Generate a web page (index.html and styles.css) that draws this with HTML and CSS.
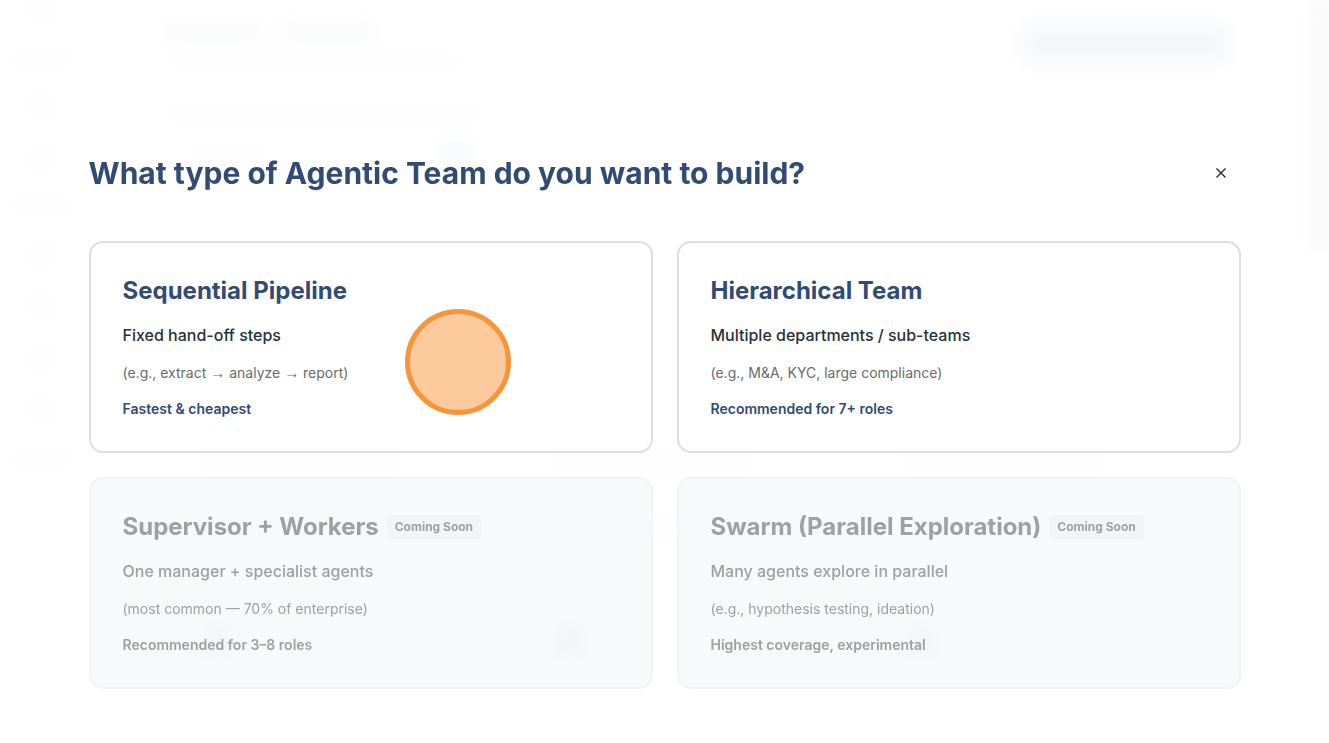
FILE: index.html
```html
<!DOCTYPE html>
<html lang="en">
<head>
    <meta charset="UTF-8">
    <meta name="viewport" content="width=device-width, initial-scale=1.0">
    <title>Agentic Teams</title>
    <link rel="stylesheet" href="styles.css">
</head>
<body>
    <!-- Page behind the dialog, faded and blurred by the overlay -->
    <div class="page" aria-hidden="true">
        <div class="sidebar">
            <span class="nav-item"></span>
            <span class="nav-item wide"></span>
            <span class="nav-item"></span>
            <span class="nav-item"></span>
            <span class="nav-item wide"></span>
            <span class="nav-item"></span>
            <span class="nav-item"></span>
            <span class="nav-item"></span>
            <span class="nav-item"></span>
            <span class="nav-item wide"></span>
        </div>
        <div class="content">
            <div class="content-header">
                <div class="heading">
                    <div class="heading-words">
                        <span class="word"></span>
                        <span class="word"></span>
                    </div>
                    <span class="subtitle"></span>
                </div>
                <span class="page-action"></span>
            </div>
            <span class="tabs"></span>
            <div class="filter">
                <span class="filter-label"></span>
                <span class="filter-count"></span>
            </div>
            <div class="tiles">
                <div class="tile"><span class="tile-title"></span><span class="tile-text"></span><span class="tile-dot"></span></div>
                <div class="tile"><span class="tile-title"></span><span class="tile-text"></span><span class="tile-dot"></span></div>
                <div class="tile"><span class="tile-title"></span><span class="tile-text"></span><span class="tile-dot"></span></div>
            </div>
        </div>
        <div class="scrollbar"></div>
    </div>

    <div class="overlay">
        <div class="dialog" role="dialog" aria-labelledby="dialog-title">
            <div class="dialog-header">
                <h1 class="dialog-title" id="dialog-title">What type of Agentic Team do you want to build?</h1>
                <button class="close" type="button" aria-label="Close">
                    <svg width="16" height="16" viewBox="0 0 16 16" fill="none" stroke="currentColor" stroke-width="1.4">
                        <path d="M3.5 3.5l9 9M12.5 3.5l-9 9"/>
                    </svg>
                </button>
            </div>

            <div class="cards">
                <button class="card" type="button">
                    <span class="card-title">Sequential Pipeline</span>
                    <span class="card-text">Fixed hand-off steps</span>
                    <span class="card-example">(e.g., extract <span class="arrow">→</span> analyze <span class="arrow">→</span> report)</span>
                    <span class="card-note">Fastest &amp; cheapest</span>
                    <span class="click-marker"></span>
                </button>
                <button class="card" type="button">
                    <span class="card-title">Hierarchical Team</span>
                    <span class="card-text">Multiple departments / sub-teams</span>
                    <span class="card-example">(e.g., M&amp;A, KYC, large compliance)</span>
                    <span class="card-note">Recommended for 7+ roles</span>
                </button>
                <button class="card" type="button" disabled>
                    <span class="card-title">Supervisor + Workers <span class="badge">Coming Soon</span></span>
                    <span class="card-text">One manager + specialist agents</span>
                    <span class="card-example">(most common — 70% of enterprise)</span>
                    <span class="card-note">Recommended for 3–8 roles</span>
                </button>
                <button class="card" type="button" disabled>
                    <span class="card-title">Swarm (Parallel Exploration) <span class="badge">Coming Soon</span></span>
                    <span class="card-text">Many agents explore in parallel</span>
                    <span class="card-example">(e.g., hypothesis testing, ideation)</span>
                    <span class="card-note">Highest coverage, experimental</span>
                </button>
            </div>
        </div>
    </div>
</body>
</html>
```
FILE: styles.css
```css
* {
    box-sizing: border-box;
}

body {
    margin: 0;
    font-family: Inter, sans-serif;
    color: #28303b;
    background: #fff;
}

/* Blurred page */
.page {
    position: fixed;
    inset: 0;
    display: flex;
    overflow: hidden;
    filter: blur(8px);
    opacity: 0.05;
}

.sidebar {
    display: flex;
    flex-direction: column;
    align-items: center;
    gap: 32px;
    width: 84px;
}

.nav-item {
    width: 20px;
    height: 20px;
    background: #c8ccd0;
}

.nav-item.wide {
    width: 56px;
    height: 12px;
}

.content {
    flex: 1;
    padding: 20px 84px 20px 80px;
}

.content-header {
    display: flex;
    justify-content: space-between;
    align-items: flex-start;
}

.heading-words {
    display: flex;
    gap: 20px;
}

.word {
    width: 96px;
    height: 24px;
    background: #b4c0d0;
}

.subtitle {
    display: block;
    width: 300px;
    height: 10px;
    margin-top: 12px;
    background: #d8dce0;
}

.page-action {
    width: 204px;
    height: 40px;
    margin-top: 4px;
    background: #4f6c9a;
}

.tabs {
    display: block;
    width: 320px;
    height: 14px;
    margin-top: 40px;
    background: #d8dce0;
}

.filter {
    display: flex;
    justify-content: space-between;
    width: 308px;
    padding-left: 28px;
    margin-top: 20px;
}

.filter-label {
    width: 72px;
    height: 12px;
    margin-top: 4px;
    background: #d8dce0;
}

.filter-count {
    width: 32px;
    height: 28px;
    background: #8fb0c8;
}

.tiles {
    display: grid;
    grid-template-columns: repeat(3, 1fr);
    gap: 32px;
    padding: 284px 0 0 40px;
}

.tile {
    display: flex;
    flex-direction: column;
    gap: 44px;
}

.tile-title,
.tile-text {
    height: 20px;
    background: #d0d4d8;
}

.tile-title {
    width: 60%;
}

.tile-dot {
    width: 28px;
    height: 28px;
    margin-top: 48px;
    background: #303840;
}

.scrollbar {
    width: 18px;
    height: 250px;
    background: #a0a0a0;
}

/* Dialog */
.overlay {
    position: relative;
    min-height: 100vh;
    padding: 153px 24px 48px;
}

.dialog {
    max-width: 1152px;
    margin: 0 auto;
}

.dialog-header {
    display: flex;
    justify-content: space-between;
    align-items: center;
    margin-bottom: 48px;
}

.dialog-title {
    margin: 0;
    font-size: 30px;
    line-height: 40px;
    font-weight: 700;
    color: #314b75;
}

.close {
    display: flex;
    justify-content: center;
    align-items: center;
    width: 40px;
    height: 40px;
    padding: 0;
    border: none;
    border-radius: 8px;
    background: none;
    color: #212934;
    cursor: pointer;
}

.cards {
    display: grid;
    grid-template-columns: repeat(2, 1fr);
    gap: 24px;
}

.card {
    position: relative;
    display: flex;
    flex-direction: column;
    align-items: flex-start;
    gap: 16px;
    padding: 32px;
    border: 2px solid #dcdfe3;
    border-radius: 14px;
    background: #fff;
    color: #28303b;
    font-family: inherit;
    text-align: left;
    cursor: pointer;
}

.card-title {
    display: flex;
    align-items: center;
    gap: 8px;
    font-size: 24px;
    line-height: 32px;
    font-weight: 700;
    color: #314b75;
}

.card-text {
    font-size: 16px;
    line-height: 24px;
    font-weight: 500;
}

.card-example {
    font-size: 14px;
    line-height: 20px;
    color: #6b6b6b;
}

.arrow {
    font-family: "Liberation Serif", serif;
    font-size: 15px;
    line-height: 16px;
}

.card-note {
    font-size: 14px;
    line-height: 20px;
    font-weight: 600;
    color: #314b75;
}

.badge {
    padding: 4px 8px;
    border-radius: 4px;
    background: #f3f4f6;
    font-size: 12px;
    line-height: 16px;
    font-weight: 700;
}

.card:disabled {
    border-color: #f1f3f5;
    background: rgba(243, 245, 248, 0.6);
    cursor: not-allowed;
}

.card:disabled span {
    color: #a0a0a0;
}

/* Click highlight over the first card */
.click-marker {
    position: absolute;
    top: 66px;
    left: 314px;
    width: 106px;
    height: 106px;
    border: 5px solid #f9943b;
    border-radius: 50%;
    background: #fdca9e;
}
```
